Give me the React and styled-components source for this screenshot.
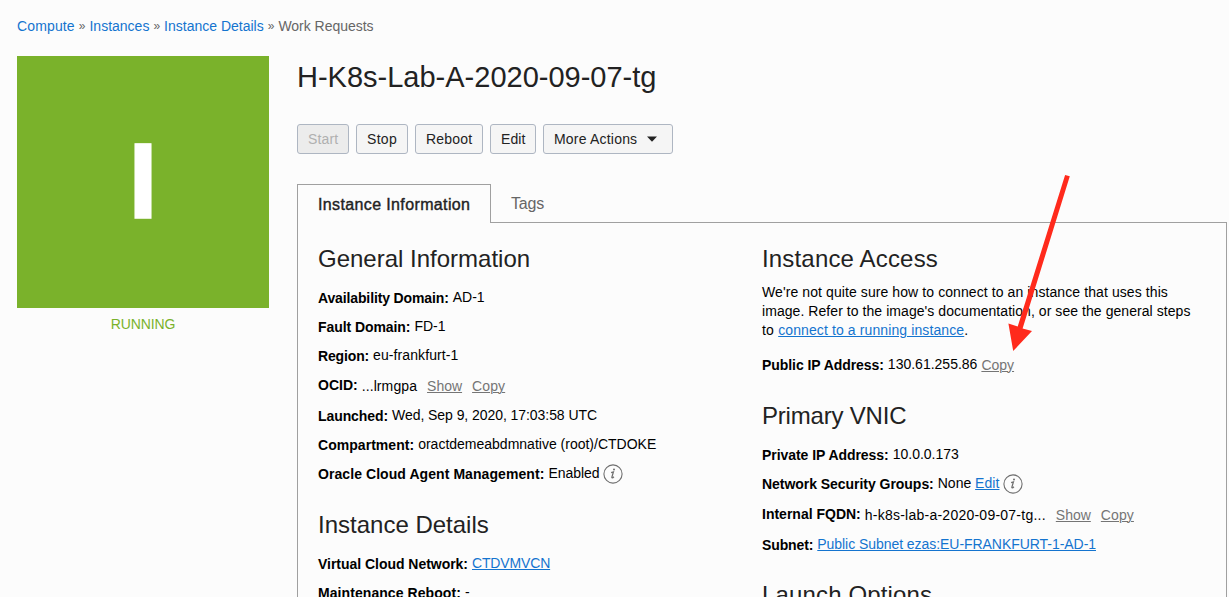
import React from "react";
import styled, { createGlobalStyle } from "styled-components";

const GlobalStyle = createGlobalStyle`
  * { box-sizing: border-box; }
  html, body { margin: 0; height: 597px; overflow: hidden; background: #fcfcfc; }
  body { font-family: "Liberation Sans", Arial, sans-serif; font-size: 14px; color: #000; }
`;

const Page = styled.div`
  position: relative;
  width: 1229px;
  height: 597px;
  overflow: hidden;
  padding: 17px 2px 0 17px;
`;

const Breadcrumbs = styled.nav`
  display: flex;
  gap: 4px;
  height: 39px;
  line-height: 19px;
  color: #666;
  white-space: pre;
`;

const T = styled.span`
  white-space: pre;
  letter-spacing: ${(p) => p.$ls || 0}px;
`;

const Separator = styled.span`
  font-size: 12px;
`;

const Crumb = styled.a`
  color: #1474cf;
  letter-spacing: ${(p) => p.$ls || 0}px;
`;

const Layout = styled.div`
  display: flex;
  gap: 28px;
`;

const Sidebar = styled.aside`
  width: 252px;
  flex: none;
`;

const StatusTile = styled.div`
  height: 252px;
  padding-bottom: 2px;
  background: #7ab22b;
  color: #fff;
  display: flex;
  align-items: center;
  justify-content: center;
  font-size: 108px;
  font-weight: 700;
  line-height: 1;
  -webkit-text-stroke: 1.4px #fff;
`;

const StatusText = styled.div`
  margin-top: 7px;
  line-height: 19px;
  text-align: center;
  letter-spacing: -0.1px;
  color: #7ab22b;
`;

const Main = styled.main`
  flex: 1;
  min-width: 0;
`;

const Title = styled.h1`
  margin: 0;
  height: 68px;
  font-size: 29px;
  font-weight: 400;
  line-height: 43px;
  color: #222;
  white-space: nowrap;
`;

const Toolbar = styled.div`
  display: flex;
  gap: 7px;
  height: 60px;
`;

const Button = styled.button`
  width: ${(p) => p.$w}px;
  height: 30px;
  padding: 0 0 1px 10px;
  display: flex;
  align-items: center;
  gap: 10px;
  border: 1px solid #aeb6c2;
  border-radius: 3px;
  background: #f5f5f5;
  font: inherit;
  color: #222;
  white-space: nowrap;
  letter-spacing: ${(p) => p.$ls || 0}px;
  &:disabled { background: #ececec; color: #b0b0b0; }
`;

const Tabs = styled.div`
  display: flex;
  height: 39px;
`;

const Tab = styled.div`
  width: 194px;
  border: 1px solid #a0a0a0;
  border-bottom: 0;
  padding-left: 20px;
  font-size: 16px;
  line-height: 39px;
  color: #222;
  -webkit-text-stroke: 0.4px #222;
  letter-spacing: 0.37px;
`;

const TabRest = styled.div`
  flex: 1;
  border-bottom: 1px solid #a0a0a0;
  padding-left: 20px;
  font-size: 16px;
  line-height: 39px;
  color: #666;
  letter-spacing: -0.15px;
`;

const Panel = styled.div`
  display: flex;
  height: 400px;
  border: 1px solid #a0a0a0;
  border-width: 0 1px;
  padding: 18px 20px 0;
`;

const Column = styled.section`
  width: 444px;
  flex: none;
`;

const Heading = styled.h2`
  margin: 0;
  height: ${(p) => p.$h}px;
  font-size: 24px;
  font-weight: 400;
  line-height: 36px;
  color: #222;
  white-space: nowrap;
  letter-spacing: ${(p) => p.$ls || 0}px;
`;

const Row = styled.div`
  display: flex;
  align-items: flex-start;
  height: ${(p) => p.$h || 29}px;
  line-height: 19px;
  white-space: pre;
`;

const Label = styled.span`
  font-weight: 700;
  margin-right: 4px;
  padding-top: ${(p) => (p.$raised ? 0 : 1)}px;
  letter-spacing: ${(p) => p.$ls || 0}px;
`;

const Value = styled.span`
  padding-top: ${(p) => (p.$low ? 1 : 0)}px;
  letter-spacing: ${(p) => p.$ls || 0}px;
`;

const Link = styled.a`
  color: #1474cf;
  text-decoration: underline;
  text-underline-offset: 1px;
  text-decoration-thickness: 1px;
  letter-spacing: ${(p) => p.$ls || 0}px;
`;

const Action = styled(Link)`
  color: #757575;
  padding-top: 1px;
  margin-left: ${(p) => p.$gap ?? 10}px;
`;

const Paragraph = styled.div`
  height: 72px;
  line-height: 19px;
  white-space: nowrap;
`;

const InfoBadge = styled.svg`
  width: 20px;
  height: 20px;
  margin-left: 4px;
  flex: none;
`;

const Arrow = styled.svg`
  position: absolute;
  left: 1000px;
  top: 170px;
`;

const Info = () => (
  <InfoBadge viewBox="0 0 20 20" fill="none" stroke="#707070">
    <circle cx="10" cy="10" r="9.1" strokeWidth="1.1" />
    <path d="M8.1 8.6l2.3-.7-1.5 5.2c-.3 1.2.7 1 2-.3" strokeWidth="1.3" />
    <circle cx="11" cy="5.4" r="1" fill="#707070" stroke="none" />
  </InfoBadge>
);

export default function App() {
  return (
    <Page>
      <GlobalStyle />
      <Breadcrumbs>
        <Crumb $ls={0.14}>Compute</Crumb><Separator>»</Separator><Crumb>Instances</Crumb><Separator>»</Separator>
        <Crumb>Instance Details</Crumb><Separator>»</Separator><T $ls={-0.03}>Work Requests</T>
      </Breadcrumbs>
      <Layout>
        <Sidebar>
          <StatusTile>I</StatusTile>
          <StatusText>RUNNING</StatusText>
        </Sidebar>
        <Main>
          <Title>H-K8s-Lab-A-2020-09-07-tg</Title>
          <Toolbar>
            <Button $w={52} $ls={0.15} disabled>Start</Button>
            <Button $w={52} $ls={0.3}>Stop</Button>
            <Button $w={68} $ls={0.2}>Reboot</Button>
            <Button $w={46} $ls={0.1}>Edit</Button>
            <Button $w={130} $ls={0.2}>
              More Actions
              <svg width="10" height="6" viewBox="0 0 10 6"><path d="M0 .5h10L5 5.8z" fill="#222" /></svg>
            </Button>
          </Toolbar>
          <Tabs>
            <Tab>Instance Information</Tab>
            <TabRest>Tags</TabRest>
          </Tabs>
          <Panel>
            <Column>
              <Heading $h={47}>General Information</Heading>
              <Row><Label $ls={-0.13}>Availability Domain:</Label><Value>AD-1</Value></Row>
              <Row><Label $ls={-0.07}>Fault Domain:</Label><Value>FD-1</Value></Row>
              <Row $h={30}><Label $ls={-0.15}>Region:</Label><Value $ls={0.1}>eu-frankfurt-1</Value></Row>
              <Row $h={30}><Label $raised>OCID:</Label><Value $low $ls={0.1}>...lrmgpa</Value><Action>Show</Action><Action $ls={0.1}>Copy</Action></Row>
              <Row><Label $ls={-0.08}>Launched:</Label><Value $ls={-0.06}>Wed, Sep 9, 2020, 17:03:58 UTC</Value></Row>
              <Row><Label $ls={0.04}>Compartment:</Label><Value>oractdemeabdmnative (root)/CTDOKE</Value></Row>
              <Row $h={43}><Label $ls={0.07}>Oracle Cloud Agent Management:</Label><Value $ls={-0.05}>Enabled</Value><Info /></Row>
              <Heading $h={47}>Instance Details</Heading>
              <Row><Label $ls={-0.03}>Virtual Cloud Network:</Label><Link $ls={-0.15}>CTDVMVCN</Link></Row>
              <Row><Label $ls={0.07}>Maintenance Reboot:</Label><Value>-</Value></Row>
            </Column>
            <Column>
              <Heading $h={42} $ls={0.17}>Instance Access</Heading>
              <Paragraph>
                <T $ls={0.09}>We're not quite sure how to connect to an instance that uses this</T><br />
                <T $ls={0.06}>image. Refer to the image's documentation, or see the general steps</T><br />
                <T $ls={0.2}>to </T><Link $ls={0.11}>connect to a running instance</Link>.
              </Paragraph>
              <Row $h={43}><Label $ls={-0.06}>Public IP Address:</Label><Value>130.61.255.86</Value><Action $gap={4}>Copy</Action></Row>
              <Heading $h={47} $ls={-0.2}>Primary VNIC</Heading>
              <Row><Label $ls={-0.05}>Private IP Address:</Label><Value>10.0.0.173</Value></Row>
              <Row $h={31}><Label $ls={-0.04}>Network Security Groups:</Label><Value>None </Value><Link $ls={0.05}>Edit</Link><Info /></Row>
              <Row $h={30}><Label $raised>Internal FQDN:</Label><Value $low $ls={0.24}>h-k8s-lab-a-2020-09-07-tg...</Value><Action>Show</Action><Action $ls={0.1}>Copy</Action></Row>
              <Row $h={42}><Label $ls={-0.12}>Subnet:</Label><Link $ls={-0.05}>Public Subnet ezas:EU-FRANKFURT-1-AD-1</Link></Row>
              <Heading $h={47} $ls={0.15}>Launch Options</Heading>
            </Column>
          </Panel>
        </Main>
      </Layout>
      <Arrow width="80" height="190" viewBox="1000 170 80 190">
        <path d="M1065.1 175L1069.8 176.3L1022.6 328.4L1032 331L1013.2 351L1008.4 323.5L1017.7 326.6Z" fill="#ff2a1c" />
      </Arrow>
    </Page>
  );
}
